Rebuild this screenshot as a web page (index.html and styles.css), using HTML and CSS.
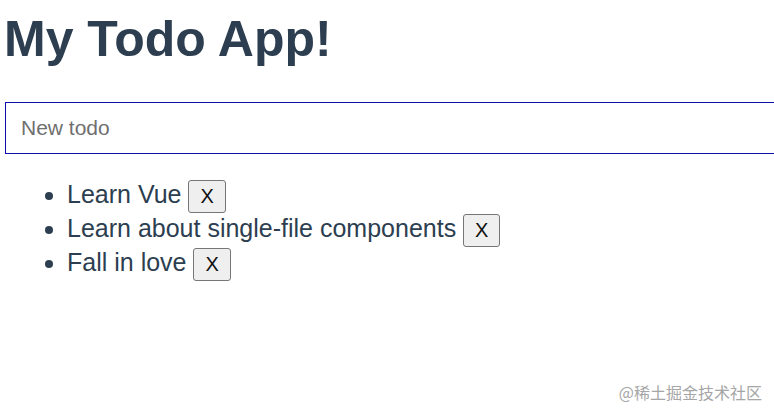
FILE: index.html
```html
<!DOCTYPE html>
<html lang="en">
<head>
<meta charset="utf-8">
<title>My Todo App!</title>
<link rel="stylesheet" href="styles.css">
</head>
<body>
<div class="app">
  <h1 class="title">My Todo App!</h1>
  <input class="new-todo" type="text" placeholder="New todo">
  <ul class="todo-list">
    <li class="todo-item">Learn Vue <button class="remove">X</button></li>
    <li class="todo-item">Learn about single-file components <button class="remove">X</button></li>
    <li class="todo-item">Fall in love <button class="remove">X</button></li>
  </ul>
</div>
<div class="watermark">@稀土掘金技术社区</div>
</body>
</html>
```

FILE: styles.css
```css
html, body {
  margin: 0;
  padding: 0;
  overflow: hidden;
  background: #ffffff;
}

body {
  width: 774px;
  height: 414px;
  position: relative;
  font-family: "Liberation Sans", Arial, sans-serif;
  color: #2c3e50;
}

.app {
  padding: 11px 0 16px 4px;
  overflow: hidden;
}

.title {
  margin: 0 0 34px 0;
  font-size: 50px;
  line-height: 57px;
  font-weight: bold;
  color: #2c3e50;
}

.new-todo {
  display: block;
  box-sizing: border-box;
  width: 772px;
  height: 52px;
  margin: 0 0 0 1px;
  padding: 0 0 0 15px;
  border: 1px solid #0c0ca6;
  border-radius: 0;
  font-family: "Liberation Sans", Arial, sans-serif;
  font-size: 21px;
  color: #2c3e50;
  outline: none;
}

.new-todo::placeholder {
  color: #6f6f6f;
}

.todo-list {
  margin: 23px 0 0 0;
  padding: 0 0 0 63px;
}

.todo-item {
  height: 34px;
  line-height: 34px;
  font-size: 25px;
  color: #2c3e50;
}

.remove {
  font-family: "Liberation Sans", Arial, sans-serif;
  font-size: 20px;
  line-height: 23px;
  padding: 4px 11px;
  border: 1px solid #767676;
  border-radius: 3px;
  background: #efefef;
  color: #111111;
  vertical-align: baseline;
}

.watermark {
  position: absolute;
  right: 12px;
  top: 382px;
  font-family: "Noto Sans CJK SC", "Liberation Sans", sans-serif;
  font-size: 16px;
  line-height: 20px;
  color: #a6a6a6;
}
```
